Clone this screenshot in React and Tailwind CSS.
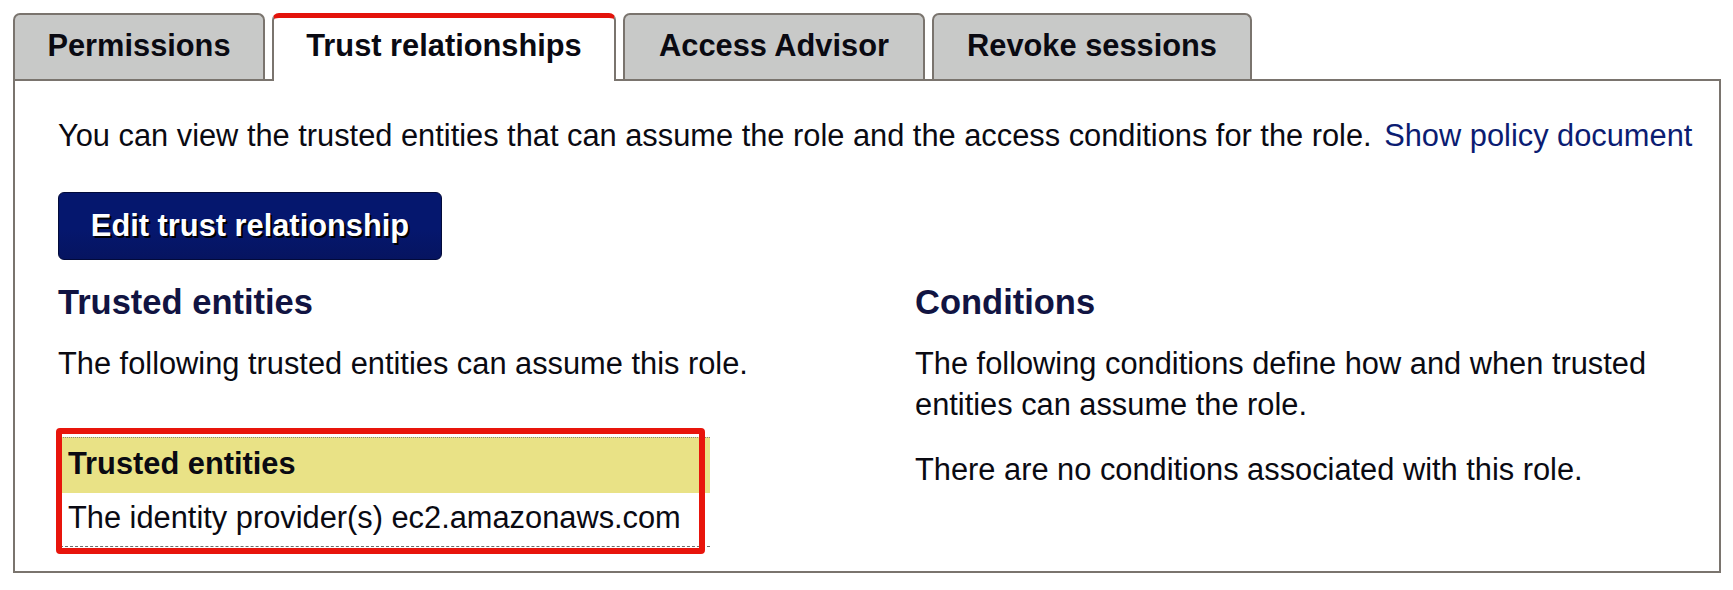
import React from 'react';

const TABS = [
  { label: 'Permissions', w: 'w-[252px]' },
  { label: 'Trust relationships', w: 'w-[344px]', active: true },
  { label: 'Access Advisor', w: 'w-[302px]' },
  { label: 'Revoke sessions', w: 'w-[320px]' },
];

function Tab({ label, w, active }) {
  if (active) {
    return (
      <div className={`${w} relative z-10 h-[68px] -mb-[2px] flex items-center justify-center rounded-t-[7px] border-t-[5px] border-x-2 border-t-[#e3130b] border-x-[#7a746e] bg-white pb-[6px] text-[30.8px] font-bold text-[#0a0a12]`}>
        {label}
      </div>
    );
  }
  return (
    <div className={`${w} h-[66px] flex items-center justify-center rounded-t-[7px] border-2 border-b-0 border-[#7a746e] bg-[#c8c9c8] pb-[2px] text-[30.8px] font-bold text-[#0a0a12]`}>
      {label}
    </div>
  );
}

export default function App() {
  return (
    <div className="min-h-[590px] bg-white pt-[13px] pl-[13px] font-['Liberation_Sans',Arial,sans-serif] text-[#0a0a12]">
      <div className="flex items-start gap-[7px]">
        {TABS.map(t => <Tab key={t.label} {...t} />)}
      </div>

      <div className="w-[1708px] border-2 border-[#7a746e] pl-[43px] pr-[20px] pt-[34px] pb-[24px]">
        <p className="whitespace-nowrap text-[30.8px] leading-[41px]">
          You can view the trusted entities that can assume the role and the access conditions for the role.{' '}
          <a href="#" className="ml-[4px] text-[#0b1c72]">Show policy document</a>
        </p>

        <button className="mt-[36px] flex h-[68px] w-[384px] items-center justify-center rounded-[6px] border border-[#020a3a] bg-[linear-gradient(#05176e_0%,#05176e_55%,#061460_100%)] text-[30.8px] font-bold text-white [text-shadow:2px_2px_0_#000]">
          Edit trust relationship
        </button>

        <div className="flex">
          <div className="w-[857px] shrink-0">
            <h2 className="mt-[23px] text-[34.5px] font-bold leading-[39px] text-[#111442]">Trusted entities</h2>
            <p className="mt-[21px] text-[30.8px] leading-[41px]">The following trusted entities can assume this role.</p>

            <div className="relative mt-[44px] -ml-[2px] w-[654px] pt-[9px] pl-[4px]">
              <div className="w-[650px]">
                <div className="h-[56px] border-t border-dotted border-[#8a8a7a] bg-[#e9e286] pl-[8px] pt-[9px] text-[30.8px] font-bold leading-[34px]">
                  Trusted entities
                </div>
                <div className="h-[54px] border-b border-dashed border-[#6e6e6e] pl-[8px] pt-[8px] text-[30.8px] leading-[34px]">
                  The identity provider(s) ec2.amazonaws.com
                </div>
              </div>
              <div className="absolute left-0 top-0 h-[126px] w-[649px] rounded-[4px] border-[6px] border-[#e8150c]" />
            </div>
          </div>

          <div className="flex-1">
            <h2 className="mt-[23px] text-[34.5px] font-bold leading-[39px] text-[#111442]">Conditions</h2>
            <p className="mt-[21px] text-[30.8px] leading-[41px]">
              The following conditions define how and when trusted entities can assume the role.
            </p>
            <p className="mt-[24px] text-[30.8px] leading-[41px]">There are no conditions associated with this role.</p>
          </div>
        </div>
      </div>
    </div>
  );
}
